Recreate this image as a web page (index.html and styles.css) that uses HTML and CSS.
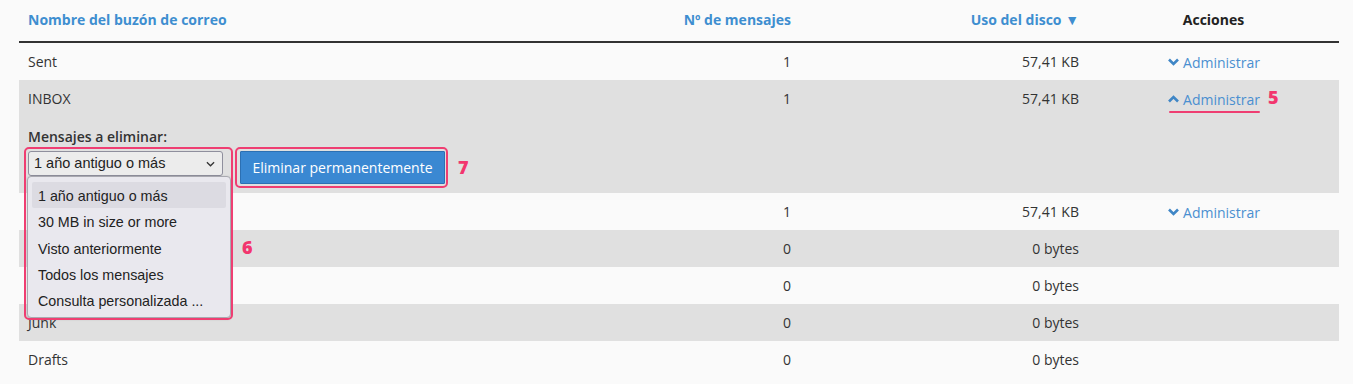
FILE: index.html
```html
<!DOCTYPE html>
<html lang="es">
<head>
<meta charset="utf-8">
<title>Buzones</title>
<link rel="stylesheet" href="styles.css">
</head>
<body>
<table class="mail">
  <colgroup>
    <col class="c1"><col class="c2"><col class="c3"><col class="c4">
  </colgroup>
  <thead>
    <tr>
      <th class="left"><a class="sort">Nombre del buzón de correo</a></th>
      <th class="right"><a class="sort">Nº de mensajes</a></th>
      <th class="right"><a class="sort">Uso del disco ▼</a></th>
      <th class="center">Acciones</th>
    </tr>
  </thead>
  <tbody>
    <tr class="row light">
      <td>Sent</td><td class="right">1</td><td class="right">57,41 KB</td>
      <td class="center"><a class="manage"><svg class="chev" viewBox="0 0 12 8"><polyline points="1.5,1.5 6,6 10.5,1.5"/></svg>Administrar</a></td>
    </tr>
    <tr class="row grey">
      <td>INBOX</td><td class="right">1</td><td class="right">57,41 KB</td>
      <td class="center"><span class="action-wrap"><a class="manage active"><svg class="chev" viewBox="0 0 12 8"><polyline points="1.5,6.5 6,2 10.5,6.5"/></svg>Administrar</a><span class="num n5">5</span></span></td>
    </tr>
    <tr class="detail grey">
      <td colspan="4">
        <div class="detail-inner">
          <div class="label">Mensajes a eliminar:</div>
          <div class="form">
            <div class="select-wrap">
              <div class="select">1 año antiguo o más<svg class="sel-chev" viewBox="0 0 10 6"><polyline points="1,1 5,5 9,1"/></svg></div>
              <ul class="list">
                <li class="hl">1 año antiguo o más</li>
                <li>30 MB in size or more</li>
                <li>Visto anteriormente</li>
                <li>Todos los mensajes</li>
                <li>Consulta personalizada ...</li>
              </ul>
              <span class="mark mark-sel"></span>
              <span class="num n6">6</span>
            </div>
            <div class="btn-wrap">
              <button class="btn">Eliminar permanentemente</button>
              <span class="mark mark-btn"></span>
              <span class="num n7">7</span>
            </div>
          </div>
        </div>
      </td>
    </tr>
    <tr class="row light">
      <td></td><td class="right">1</td><td class="right">57,41 KB</td>
      <td class="center"><a class="manage"><svg class="chev" viewBox="0 0 12 8"><polyline points="1.5,1.5 6,6 10.5,1.5"/></svg>Administrar</a></td>
    </tr>
    <tr class="row grey">
      <td></td><td class="right">0</td><td class="right">0 bytes</td><td></td>
    </tr>
    <tr class="row light">
      <td></td><td class="right">0</td><td class="right">0 bytes</td><td></td>
    </tr>
    <tr class="row grey">
      <td>Junk</td><td class="right">0</td><td class="right">0 bytes</td><td></td>
    </tr>
    <tr class="row light">
      <td>Drafts</td><td class="right">0</td><td class="right">0 bytes</td><td></td>
    </tr>
  </tbody>
</table>
</body>
</html>
```

FILE: styles.css
```css
html, body {
  margin: 0;
  padding: 0;
  background: #fafafa;
}
body {
  font-family: "Open Sans", "Liberation Sans", sans-serif;
  font-size: 14px;
  color: #333;
  padding: 0 14px 0 19px;
}
.mail {
  width: 1320px;
  border-collapse: collapse;
  table-layout: fixed;
}
.c1 { width: 500px; }
.c2 { width: 281px; }
.c3 { width: 288px; }
.c4 { width: 251px; }

th {
  height: 42px;
  padding: 0 9px 2px;
  font-weight: 700;
  color: #222;
  border-bottom: 2px solid #333;
  box-sizing: border-box;
}
.left { text-align: left; }
.right { text-align: right; }
.center { text-align: center; }
.sort { color: #3e8ed0; text-decoration: none; }

.row td {
  height: 37px;
  padding: 0 9px;
  vertical-align: middle;
}
.light { background: #fafafa; }
.grey { background: #e0e0e0; }

.manage {
  color: #4a8fd0;
  text-decoration: none;
  display: inline-flex;
  align-items: center;
  gap: 3px;
  margin-left: 0;
}
.chev {
  width: 13px;
  height: 8px;
  fill: none;
  stroke: #3f86c6;
  stroke-width: 2.6;
}
.action-wrap { position: relative; display: inline-block; }
.manage.active {
  position: relative;
}
.manage.active::after {
  content: "";
  position: absolute;
  left: 2px;
  right: 0;
  bottom: -4px;
  height: 2px;
  background: #ef3e72;
  border-radius: 1px;
}
.num {
  position: absolute;
  color: #f2366e;
  font-weight: 800;
  font-size: 18px;
  line-height: 20px;
}
.n5 { left: 101px; top: -1px; }

.detail td {
  padding: 0 9px;
  vertical-align: top;
}
.detail-inner {
  height: 76px;
  box-sizing: border-box;
  padding-top: 11px;
}
.label {
  font-weight: 600;
  color: #333;
  line-height: 18px;
}
.form {
  display: flex;
  align-items: flex-start;
  gap: 17px;
  margin-top: 5px;
}
.select-wrap {
  position: relative;
  width: 195px;
}
.select {
  box-sizing: border-box;
  width: 195px;
  height: 25px;
  line-height: 21px;
  border: 1px solid #8f8f9d;
  border-radius: 3px;
  background: #ececec;
  font-family: "Liberation Sans", Arial, sans-serif;
  font-size: 14.5px;
  color: #222;
  padding: 1px 0 0 5px;
  position: relative;
}
.sel-chev {
  position: absolute;
  right: 7px;
  top: 9px;
  width: 9px;
  height: 6px;
  fill: none;
  stroke: #333;
  stroke-width: 1.4;
}
.list {
  position: absolute;
  left: -1px;
  top: 25px;
  width: 204px;
  height: 142px;
  box-sizing: border-box;
  margin: 0;
  padding: 5px 4px 3px;
  list-style: none;
  background: #e9e8ee;
  border: 1px solid #a9a9b0;
  border-radius: 4px;
  box-shadow: 0 1px 3px rgba(0,0,0,0.2);
  font-family: "Liberation Sans", Arial, sans-serif;
  font-size: 14.3px;
  color: #222;
  z-index: 2;
}
.list li {
  height: 26.3px;
  line-height: 28px;
  padding-left: 6px;
  border-radius: 2px;
}
.list li.hl { background: #dcdbe2; }
.mark {
  position: absolute;
  border: 2px solid #ef3e72;
  border-radius: 5px;
  pointer-events: none;
  z-index: 3;
}
.mark-sel {
  left: -4px;
  top: -4px;
  width: 205px;
  height: 169px;
}
.n6 { left: 214px; top: 86px; }
.btn-wrap {
  position: relative;
}
.btn {
  display: block;
  box-sizing: border-box;
  width: 205px;
  height: 33px;
  background: #3a88d2;
  border: 1px solid #2c70b3;
  border-radius: 1px;
  color: #fff;
  font-family: "Open Sans", "Liberation Sans", sans-serif;
  font-size: 14px;
  padding: 0;
}
.mark-btn {
  left: -5px;
  top: -4px;
  width: 209px;
  height: 37px;
}
.n7 { left: 218px; top: 6px; }
```
